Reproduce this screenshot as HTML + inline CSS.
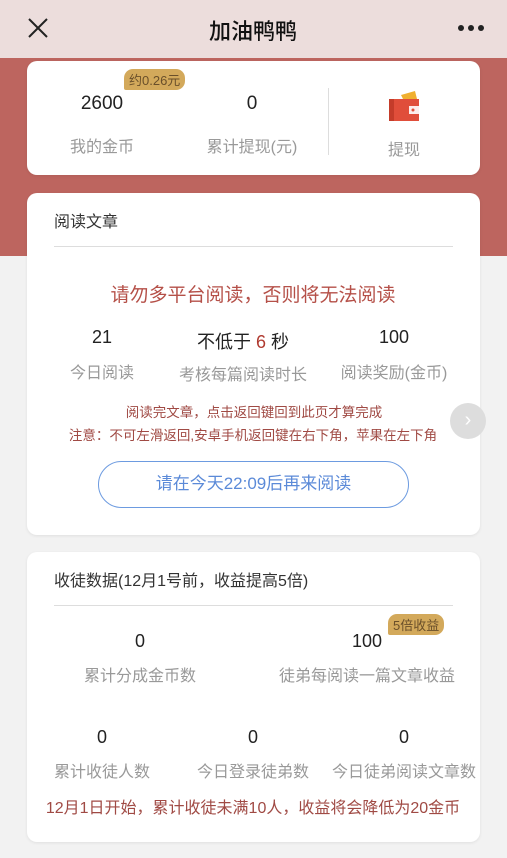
<!DOCTYPE html><html><head><meta charset="utf-8"><style>
*{margin:0;padding:0;box-sizing:border-box}
body{width:507px;height:858px;overflow:hidden;background:#f2f2f2;font-family:"Liberation Sans","Noto Sans CJK SC",sans-serif;position:relative}
.a{position:absolute;white-space:nowrap}
.c{transform:translateX(-50%);text-align:center}
.card{position:absolute;left:27px;width:453px;background:#fff;border-radius:10px;box-shadow:0 1px 3px rgba(0,0,0,.08)}
.g{color:#999;font-size:16px}
.n{color:#222;font-size:18px}
.r{color:#a04a44}
.tag{position:absolute;background:#d3a95b;color:#6a4f2a;font-size:13px;border-radius:9px 9px 9px 2px;padding:1px 5px}
</style></head><body>
<div class="a" style="left:0;top:0;width:507px;height:58px;background:#ecdddc"></div>
<div class="a" style="left:0;top:58px;width:507px;height:198px;background:#bd655f"></div>
<svg class="a" style="left:28px;top:18px" width="20" height="20"><path d="M1 1L19 19M19 1L1 19" stroke="#222" stroke-width="2"/></svg>
<div class="a c" style="left:253px;top:14px;font-size:22px;color:#111;font-weight:500">加油鸭鸭</div>
<div class="a" style="left:458px;top:25px;width:6px;height:6px;border-radius:3px;background:#222;box-shadow:10px 0 #222,20px 0 #222"></div>

<div class="card" style="top:61px;height:114px"></div>
<div class="tag" style="left:124px;top:69px">约0.26元</div>
<div class="a c n" style="left:102px;top:93px;font-size:19px">2600</div>
<div class="a c g" style="left:102px;top:133px">我的金币</div>
<div class="a c n" style="left:252px;top:93px;font-size:19px">0</div>
<div class="a c g" style="left:252px;top:133px">累计提现(元)</div>
<div class="a" style="left:328px;top:88px;width:1px;height:67px;background:#ddd"></div>
<svg class="a" style="left:389px;top:91px" width="32" height="32"><path d="M12 4L26 0L28 8H14Z" fill="#f0b030"/><rect x="0" y="8" width="30" height="22" fill="#e04e3a"/><rect x="0" y="8" width="5" height="22" fill="#c43c2a"/><rect x="20" y="15" width="10" height="8" fill="#fff" opacity=".9"/><circle cx="24" cy="19" r="1.5" fill="#e04e3a"/></svg>
<div class="a c g" style="left:404px;top:136px">提现</div>

<div class="card" style="top:193px;height:342px"></div>
<div class="a" style="left:54px;top:208px;font-size:16px;color:#333">阅读文章</div>
<div class="a" style="left:54px;top:246px;width:399px;height:1px;background:#ddd"></div>
<div class="a c r" style="left:253px;top:280px;font-size:19px;color:#b55048">请勿多平台阅读，否则将无法阅读</div>
<div class="a c n" style="left:102px;top:327px">21</div>
<div class="a c g" style="left:102px;top:359px">今日阅读</div>
<div class="a c n" style="left:243px;top:328px">不低于 <span style="color:#b03a30">6</span> 秒</div>
<div class="a c g" style="left:243px;top:361px">考核每篇阅读时长</div>
<div class="a c n" style="left:394px;top:327px">100</div>
<div class="a c g" style="left:394px;top:359px">阅读奖励(金币)</div>
<div class="a c r" style="left:254px;top:401px;font-size:13.5px">阅读完文章，点击返回键回到此页才算完成</div>
<div class="a c r" style="left:253px;top:424px;font-size:13.5px">注意：不可左滑返回,安卓手机返回键在右下角，苹果在左下角</div>
<div class="a" style="left:450px;top:403px;width:36px;height:36px;border-radius:18px;background:#ddd;color:#fff;font-size:20px;text-align:center;line-height:34px">›</div>
<div class="a" style="left:98px;top:461px;width:311px;height:47px;border:1.5px solid #6d9be0;border-radius:24px;color:#5b8ad8;font-size:17px;text-align:center;line-height:44px">请在今天22:09后再来阅读</div>

<div class="card" style="top:552px;height:290px"></div>
<div class="a" style="left:54px;top:567px;font-size:16px;color:#333">收徒数据(12月1号前，收益提高5倍)</div>
<div class="a" style="left:54px;top:605px;width:399px;height:1px;background:#ddd"></div>
<div class="a c n" style="left:140px;top:631px">0</div>
<div class="a c g" style="left:140px;top:662px">累计分成金币数</div>
<div class="a c n" style="left:367px;top:631px">100</div>
<div class="tag" style="left:388px;top:614px">5倍收益</div>
<div class="a c g" style="left:367px;top:662px">徒弟每阅读一篇文章收益</div>
<div class="a c n" style="left:102px;top:727px">0</div>
<div class="a c g" style="left:102px;top:758px">累计收徒人数</div>
<div class="a c n" style="left:253px;top:727px">0</div>
<div class="a c g" style="left:253px;top:758px">今日登录徒弟数</div>
<div class="a c n" style="left:404px;top:727px">0</div>
<div class="a c g" style="left:404px;top:758px">今日徒弟阅读文章数</div>
<div class="a c r" style="left:253px;top:794px;font-size:16px">12月1日开始，累计收徒未满10人，收益将会降低为20金币</div>
</body></html>
